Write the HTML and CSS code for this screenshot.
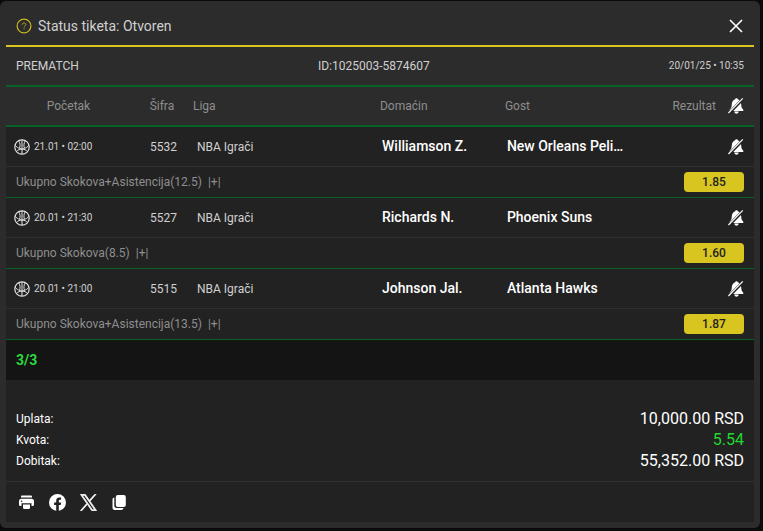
FILE: index.html
```html
<!DOCTYPE html>
<html lang="sr-Latn">
<head>
<meta charset="utf-8">
<meta name="viewport" content="width=device-width, initial-scale=1">
<title>Status tiketa</title>
<link rel="stylesheet" href="styles.css">
</head>
<body>
<svg class="defs" aria-hidden="true">
  <symbol id="bell-off" viewBox="0 0 16 16">
    <path fill="#fff" d="M8.500.3c.7 0 1.200.4 1.300 1C12 2 13 4 13.200 6.300c.1 2.700.5 3.900 2.100 5.500V13H1.700v-1.200c1.600-1.600 2-2.800 2.100-5.500C4 4 5 2 7.200 1.300c.1-.6.6-1 1.300-1zM6.300 13.600h4.400c-.2 1.300-1 2.100-2.200 2.100s-2-.8-2.200-2.100z"/>
    <path class="bell-gap" stroke-width="3" d="M.8 15.400 15.200.8"/>
    <path stroke="#fff" stroke-width="1.200" d="M.4 15 14.800.4"/>
  </symbol>
  <symbol id="basketball" viewBox="0 0 16 16">
    <g fill="none" stroke="#e2e2e2" stroke-width="1">
      <circle cx="8" cy="8" r="7.200" stroke-width="1.200"/>
      <path d="M8 .8v14.400M4.600 1.500C6.200 4 6.500 6.700 5.500 9.300M11.400 1.500C9.800 4 9.500 6.700 10.500 9.300M1 6.200c1.500 1.700 3 2.800 4.500 3.100L8 10.200l2.500-.9c1.500-.3 3-1.400 4.500-3.100M2.500 12.600c1.500-2 3.300-2.500 5.500-2.400 2.200-.1 4 .4 5.500 2.400"/>
    </g>
  </symbol>
</svg>

<main class="ticket">
  <header class="ticket-header">
    <svg class="icon-help" viewBox="0 0 16 16" aria-hidden="true">
      <circle cx="8" cy="8" r="6.900" fill="none" stroke="#c9b820" stroke-width="1.200"/>
      <path d="M6.200 6.700c0-1.100.7-1.800 1.800-1.800s1.800.7 1.800 1.600c0 1.300-1.700 1.300-1.700 2.700M8.100 10.300v1.100" fill="none" stroke="#b5a622" stroke-width="1"/>
    </svg>
    <h1 class="title">Status tiketa: Otvoren</h1>
    <button class="close" type="button" aria-label="Zatvori">
      <svg viewBox="0 0 16 16" aria-hidden="true"><path d="M2 2l12 12M14 2 2 14" stroke="#fff" stroke-width="1.600"/></svg>
    </button>
  </header>

  <section class="meta">
    <span>PREMATCH</span>
    <span>ID:1025003-5874607</span>
    <time class="placed">20/01/25 • 10:35</time>
  </section>

  <table class="bets">
    <colgroup>
      <col class="c-start"><col class="c-code"><col class="c-league"><col class="c-team"><col class="c-team"><col><col class="c-bell">
    </colgroup>
    <thead>
      <tr>
        <th class="center">Početak</th>
        <th class="center">Šifra</th>
        <th>Liga</th>
        <th>Domaćin</th>
        <th>Gost</th>
        <th class="right">Rezultat</th>
        <th class="bell-cell"><button class="bell" type="button" aria-label="Obaveštenja"><svg aria-hidden="true"><use href="#bell-off"/></svg></button></th>
      </tr>
    </thead>
    <tbody>
      <tr class="match">
        <td><div class="start"><svg aria-hidden="true"><use href="#basketball"/></svg><time>21.01 • 02:00</time></div></td>
        <td class="code">5532</td>
        <td class="league">NBA Igrači</td>
        <td class="team">Williamson Z.</td>
        <td class="team">New Orleans Peli…</td>
        <td></td>
        <td class="bell-cell"><button class="bell" type="button" aria-label="Obaveštenja"><svg aria-hidden="true"><use href="#bell-off"/></svg></button></td>
      </tr>
      <tr class="pick">
        <td colspan="7"><div class="pick-line"><span>Ukupno Skokova+Asistencija(12.5) &nbsp;|+|</span><span class="odd">1.85</span></div></td>
      </tr>
      <tr class="match">
        <td><div class="start"><svg aria-hidden="true"><use href="#basketball"/></svg><time>20.01 • 21:30</time></div></td>
        <td class="code">5527</td>
        <td class="league">NBA Igrači</td>
        <td class="team">Richards N.</td>
        <td class="team">Phoenix Suns</td>
        <td></td>
        <td class="bell-cell"><button class="bell" type="button" aria-label="Obaveštenja"><svg aria-hidden="true"><use href="#bell-off"/></svg></button></td>
      </tr>
      <tr class="pick">
        <td colspan="7"><div class="pick-line"><span>Ukupno Skokova(8.5) &nbsp;|+|</span><span class="odd">1.60</span></div></td>
      </tr>
      <tr class="match">
        <td><div class="start"><svg aria-hidden="true"><use href="#basketball"/></svg><time>20.01 • 21:00</time></div></td>
        <td class="code">5515</td>
        <td class="league">NBA Igrači</td>
        <td class="team">Johnson Jal.</td>
        <td class="team">Atlanta Hawks</td>
        <td></td>
        <td class="bell-cell"><button class="bell" type="button" aria-label="Obaveštenja"><svg aria-hidden="true"><use href="#bell-off"/></svg></button></td>
      </tr>
      <tr class="pick">
        <td colspan="7"><div class="pick-line"><span>Ukupno Skokova+Asistencija(13.5) &nbsp;|+|</span><span class="odd">1.87</span></div></td>
      </tr>
    </tbody>
  </table>

  <div class="system">3/3</div>

  <dl class="totals">
    <div><dt>Uplata:</dt><dd>10,000.00 RSD</dd></div>
    <div><dt>Kvota:</dt><dd class="win">5.54</dd></div>
    <div><dt>Dobitak:</dt><dd>55,352.00 RSD</dd></div>
  </dl>

  <footer class="actions">
    <button type="button" aria-label="Štampaj">
      <svg viewBox="0 0 17 17" fill="#fff" aria-hidden="true"><path d="M4 1.500h9a1 1 0 0 1 1 1v1H3v-1a1 1 0 0 1 1-1zM3.500 4.800h10A2.500 2.500 0 0 1 16 7.300v3.200a1.500 1.500 0 0 1-1.500 1.500h-1V9.300h-10V12h-1A1.500 1.500 0 0 1 1 10.500V7.300a2.500 2.500 0 0 1 2.500-2.500z"/><path d="M5 10.400h7v3.100a1.500 1.500 0 0 1-1.500 1.500h-4A1.500 1.500 0 0 1 5 13.500z"/><circle cx="3.500" cy="7.300" r=".8" fill="#222"/></svg>
    </button>
    <button type="button" aria-label="Facebook">
      <svg viewBox="0 0 17 17" aria-hidden="true"><circle cx="8.500" cy="8.500" r="8.500" fill="#fff"/><path fill="#222" d="M7.200 17v-5.900H5.100V8.600h2.100V6.800c0-2.200 1.300-3.300 3.200-3.300.9 0 1.700.1 1.700.1v2.100h-1c-1 0-1.300.6-1.300 1.300v1.600h2.300l-.4 2.500H9.800V17z"/></svg>
    </button>
    <button type="button" aria-label="X">
      <svg viewBox="0 0 24 24" fill="#fff" aria-hidden="true"><path d="M14.200 10.200 22.700.5h-2l-7.400 8.400L7.400.5H.6l8.900 12.800L.6 23.500h2l7.800-8.900 6.200 8.900h6.800zm-2.800 3.200-.9-1.300L3.300 2h3.200l5.800 8.200.9 1.300 7.500 10.600h-3.200z" stroke="#fff" stroke-width="1"/></svg>
    </button>
    <button type="button" aria-label="Kopiraj">
      <svg viewBox="0 0 17 17" aria-hidden="true"><path fill="#fff" d="M3.300 3.500v8c0 1.700.8 2.400 2.400 2.400h6.600c0 1.400-.8 2.100-2 2.100H4.200C2.400 16 1.500 15.200 1.500 13.400V5.600c0-1.200.6-1.900 1.800-2.100z"/><rect x="4.800" y="1" width="10" height="12" rx="2" fill="#fff"/></svg>
    </button>
  </footer>
</main>
</body>
</html>
```

FILE: styles.css
```css
* {
  box-sizing: border-box;
}

body {
  margin: 0;
  padding: 1px 3px 3px 0;
  background: #0b0b0b;
  color: #fff;
  font-family: Roboto, "Liberation Sans", sans-serif;
  font-size: 12px;
  line-height: 20px;
}

button {
  display: block;
  padding: 0;
  border: 0;
  background: none;
  cursor: pointer;
}

svg {
  display: block;
}

.defs {
  position: absolute;
  width: 0;
  height: 0;
}

.ticket {
  padding: 0 6px 6px;
  border-radius: 6px;
  background: #2c2c2c;
}

.ticket-header {
  display: flex;
  align-items: center;
  height: 46px;
  padding: 6px 10px 0;
  border-bottom: 2px solid #d8c520;
}

.icon-help {
  width: 16px;
  height: 16px;
  margin-right: 6px;
}

.title {
  margin: 0;
  color: #d0d0d0;
  font-size: 14px;
  font-weight: 400;
}

.close {
  margin-left: auto;
}

.close svg {
  width: 16px;
  height: 16px;
}

.meta {
  display: flex;
  align-items: center;
  justify-content: space-between;
  height: 40px;
  padding: 0 10px;
  border-bottom: 2px solid #096128;
  color: #d0d0d0;
}

.placed {
  font-size: 10px;
}

.bets {
  width: 100%;
  table-layout: fixed;
  border-spacing: 0;
  background: #222;
}

.c-start,
.c-team {
  width: 16.700%;
}

.c-code {
  width: 8.300%;
}

.c-league {
  width: 25%;
}

.c-bell {
  width: 38px;
}

th,
td {
  padding: 0;
  text-align: left;
  white-space: nowrap;
}

th {
  height: 40px;
  border-bottom: 2px solid #096128;
  background: #2c2c2c;
  color: #8e8e8e;
  font-weight: 400;
}

.center {
  text-align: center;
}

.right {
  text-align: right;
}

.bell-cell {
  padding-right: 10px;
}

.bell {
  margin-left: auto;
}

.bell svg {
  width: 16px;
  height: 16px;
}

.bell-gap {
  stroke: #222;
}

.match td {
  height: 40px;
  border-bottom: 1px solid #2f2f2f;
}

.start {
  display: flex;
  align-items: center;
  gap: 4px;
  padding-left: 8px;
  color: #d0d0d0;
  font-size: 10px;
}

.start svg {
  width: 16px;
  height: 16px;
}

.match .code {
  padding-left: 3px;
  color: #d0d0d0;
  text-align: center;
}

.match .league {
  padding-left: 4px;
  color: #d0d0d0;
}

.match .team {
  padding: 0 0 2px 2px;
  font-size: 14px;
  font-weight: 500;
}

.pick td {
  height: 31px;
  border-bottom: 1px solid #096128;
}

.pick-line {
  display: flex;
  align-items: center;
  justify-content: space-between;
  padding: 0 10px;
  color: #8e8e8e;
}

.odd {
  width: 60px;
  border-radius: 4px;
  background: #d8c520;
  color: #222;
  font-weight: 500;
  text-align: center;
}

.system {
  padding: 10px;
  background: #141414;
  color: #2fd83c;
  font-size: 14px;
  font-weight: 700;
}

.totals {
  margin: 0;
  padding: 28px 10px 10px;
  border-bottom: 1px solid #2f2f2f;
  background: #222;
}

.totals div {
  display: flex;
  align-items: center;
  justify-content: space-between;
  height: 21px;
}

.totals dd {
  margin: 0;
  font-size: 16px;
}

.totals .win {
  color: #20d82e;
}

.actions {
  display: flex;
  align-items: center;
  gap: 14px;
  height: 40px;
  padding: 0 12px;
  background: #222;
}

.actions svg {
  width: 17px;
  height: 17px;
}
```
